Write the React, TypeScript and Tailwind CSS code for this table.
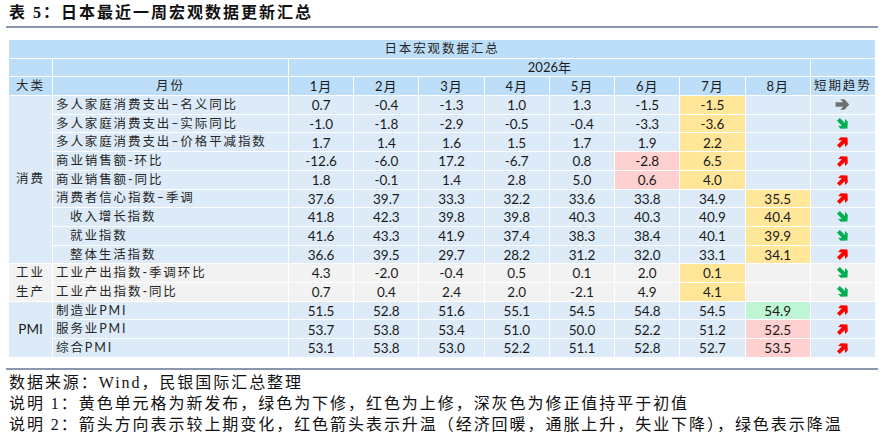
import React from "react";

type HL = "" | "y" | "p" | "g";
type Row = {
  label: string;
  indent?: boolean;
  vals: string[];
  hl: HL[];
  trend: "r" | "g" | "n";
};

const consume: Row[] = [
  { label: "多人家庭消费支出–名义同比", vals: ["0.7", "-0.4", "-1.3", "1.0", "1.3", "-1.5", "-1.5", ""], hl: ["", "", "", "", "", "", "y", ""], trend: "n" },
  { label: "多人家庭消费支出–实际同比", vals: ["-1.0", "-1.8", "-2.9", "-0.5", "-0.4", "-3.3", "-3.6", ""], hl: ["", "", "", "", "", "", "y", ""], trend: "g" },
  { label: "多人家庭消费支出–价格平减指数", vals: ["1.7", "1.4", "1.6", "1.5", "1.7", "1.9", "2.2", ""], hl: ["", "", "", "", "", "", "y", ""], trend: "r" },
  { label: "商业销售额-环比", vals: ["-12.6", "-6.0", "17.2", "-6.7", "0.8", "-2.8", "6.5", ""], hl: ["", "", "", "", "", "p", "y", ""], trend: "r" },
  { label: "商业销售额-同比", vals: ["1.8", "-0.1", "1.4", "2.8", "5.0", "0.6", "4.0", ""], hl: ["", "", "", "", "", "p", "y", ""], trend: "r" },
  { label: "消费者信心指数–季调", vals: ["37.6", "39.7", "33.3", "32.2", "33.6", "33.8", "34.9", "35.5"], hl: ["", "", "", "", "", "", "", "y"], trend: "r" },
  { label: "收入增长指数", indent: true, vals: ["41.8", "42.3", "39.8", "39.8", "40.3", "40.3", "40.9", "40.4"], hl: ["", "", "", "", "", "", "", "y"], trend: "g" },
  { label: "就业指数", indent: true, vals: ["41.6", "43.3", "41.9", "37.4", "38.3", "38.4", "40.1", "39.9"], hl: ["", "", "", "", "", "", "", "y"], trend: "g" },
  { label: "整体生活指数", indent: true, vals: ["36.6", "39.5", "29.7", "28.2", "31.2", "32.0", "33.1", "34.1"], hl: ["", "", "", "", "", "", "", "y"], trend: "r" },
];

const industry: Row[] = [
  { label: "工业产出指数-季调环比", vals: ["4.3", "-2.0", "-0.4", "0.5", "0.1", "2.0", "0.1", ""], hl: ["", "", "", "", "", "", "y", ""], trend: "g" },
  { label: "工业产出指数-同比", vals: ["0.7", "0.4", "2.4", "2.0", "-2.1", "4.9", "4.1", ""], hl: ["", "", "", "", "", "", "y", ""], trend: "g" },
];

const pmi: Row[] = [
  { label: "制造业PMI", vals: ["51.5", "52.8", "51.6", "55.1", "54.5", "54.8", "54.5", "54.9"], hl: ["", "", "", "", "", "", "", "g"], trend: "r" },
  { label: "服务业PMI", vals: ["53.7", "53.8", "53.4", "51.0", "50.0", "52.2", "51.2", "52.5"], hl: ["", "", "", "", "", "", "", "p"], trend: "r" },
  { label: "综合PMI", vals: ["53.1", "53.8", "53.0", "52.2", "51.1", "52.8", "52.7", "53.5"], hl: ["", "", "", "", "", "", "", "p"], trend: "r" },
];

const hlBg: Record<string, string> = {
  y: "bg-[#FFE699]",
  p: "bg-[#FFD0D0]",
  g: "bg-[#BDF5D5]",
};

function Arrow({ t }: { t: "r" | "g" | "n" }) {
  const color = t === "r" ? "#FF0000" : t === "g" ? "#00B050" : "#707070";
  const rot = t === "r" ? -45 : t === "g" ? 45 : 0;
  const size = t === "n" ? 15 : 14;
  return (
    <svg width={size} height={size} viewBox="0 0 14 14">
      <g transform={`rotate(${rot} 7 7)`}>
        <path d="M0.5 5 H7.5 L5 2 H8.8 L13.3 7 L8.8 12 H5 L7.5 9 H0.5 Z" fill={color} />
      </g>
    </svg>
  );
}

const cjk = "tracking-[1.9px] text-[12.5px]";

function DataRow({ r, base }: { r: Row; base: string }) {
  return (
    <>
      <div className={`${base} flex items-center pt-px ${r.indent ? "pl-[17px]" : "pl-[3px]"} ${cjk} text-[#262626] whitespace-nowrap`}>
        {r.label}
      </div>
      {r.vals.map((v, i) => (
        <div
          key={i}
          className={`${r.hl[i] ? hlBg[r.hl[i]] : base} flex items-center justify-center pt-px text-[13.5px] text-[#1a1a1a]`}
        >
          {v}
        </div>
      ))}
      <div className={`${base} flex items-center justify-center`}>
        <Arrow t={r.trend} />
      </div>
    </>
  );
}

export default function App() {
  const hdr = "bg-[#BDDEF8]";
  const blue = "bg-[#DDEBF8]";
  const gray = "bg-[#F2F2F2]";
  const months = ["1月", "2月", "3月", "4月", "5月", "6月", "7月", "8月"];
  return (
    <div
      className="w-[884px] h-[437px] bg-white overflow-hidden"
      style={{ fontFamily: '"Lato", "Noto Sans CJK SC", sans-serif' }}
    >
      <div
        className="h-[26px] pl-[9px] flex items-center text-[16px] font-bold tracking-[2px] text-[#111]"
        style={{ fontFamily: '"Liberation Serif", "Noto Sans CJK SC", serif' }}
      >
        表 5：日本最近一周宏观数据更新汇总
      </div>
      <div className="ml-[6px] w-[872px] h-[2px] bg-[#8A98AE]" />
      <div className="mt-[12px] ml-[9px] w-[866px] grid grid-cols-[43px_235px_repeat(9,minmax(0,1fr))] auto-rows-[17.7px] gap-px bg-white">
        <div className={`${hdr} col-span-11 flex items-center justify-center pt-px ${cjk} text-[#262626]`}>
          日本宏观数据汇总
        </div>
        <div className={hdr} />
        <div className={hdr} />
        <div className={`${hdr} col-span-8 flex items-center justify-center pt-px text-[13px] text-[#1a1a1a]`}>2026年</div>
        <div className={hdr} />
        <div className={`${hdr} flex items-center justify-center pt-px ${cjk} text-[#262626]`}>大类</div>
        <div className={`${hdr} flex items-center justify-center pt-px ${cjk} text-[#262626]`}>月份</div>
        {months.map((m) => (
          <div key={m} className={`${hdr} flex items-center justify-center pt-px text-[13px] tracking-[1px] text-[#1a1a1a]`}>
            {m}
          </div>
        ))}
        <div className={`${hdr} flex items-center justify-center pt-px ${cjk} text-[#262626]`}>短期趋势</div>

        <div className={`${blue} row-span-9 flex items-center justify-center ${cjk} text-[#262626]`}>消费</div>
        {consume.map((r, i) => (
          <DataRow key={`c${i}`} r={r} base={blue} />
        ))}

        <div className={`${gray} row-span-2 flex flex-col justify-around items-center ${cjk} text-[#262626]`}>
          <span>工业</span>
          <span>生产</span>
        </div>
        {industry.map((r, i) => (
          <DataRow key={`i${i}`} r={r} base={gray} />
        ))}

        <div className={`${blue} row-span-3 flex items-center justify-center text-[13.5px] text-[#1a1a1a]`}>PMI</div>
        {pmi.map((r, i) => (
          <DataRow key={`p${i}`} r={r} base={blue} />
        ))}
      </div>
      <div className="mt-[11px] ml-[6px] w-[872px] h-[2px] bg-[#8A98AE]" />
      <div
        className="pl-[9px] pt-[2px] text-[16px] leading-[21px] tracking-[1.95px] text-[#111]"
        style={{ fontFamily: '"Liberation Serif", "Noto Sans CJK SC", serif' }}
      >
        <div>数据来源：Wind，民银国际汇总整理</div>
        <div>说明 1：黄色单元格为新发布，绿色为下修，红色为上修，深灰色为修正值持平于初值</div>
        <div>说明 2：箭头方向表示较上期变化，红色箭头表示升温（经济回暖，通胀上升，失业下降），绿色表示降温</div>
      </div>
    </div>
  );
}
